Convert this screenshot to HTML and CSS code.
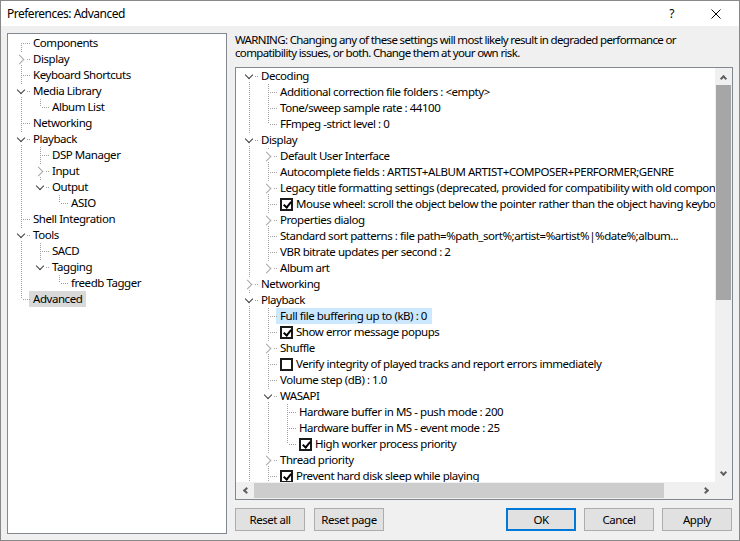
FILE: index.html
```html
<!DOCTYPE html>
<html lang="en">
<head>
    <meta charset="UTF-8">
    <meta name="viewport" content="width=device-width, initial-scale=1.0">
    <title>Preferences: Advanced</title>
    <link rel="stylesheet" href="styles.css">
</head>
<body>
<div class="window">
    <div class="titlebar">
        <span class="title">Preferences: Advanced</span>
        <span class="help">?</span>
        <svg class="close" width="10" height="10" viewBox="0 0 10 10">
            <path d="M0.5 0.5 L9.5 9.5 M9.5 0.5 L0.5 9.5" stroke="#000" stroke-width="1" fill="none"/>
        </svg>
    </div>

    <div class="content">
        <!-- page list -->
        <div class="tree nav">
            <div class="row"><span class="g f"></span><span class="lbl">Components</span></div>
            <div class="row"><span class="g t"><span class="exp closed"></span></span><span class="lbl">Display</span></div>
            <div class="row"><span class="g t"></span><span class="lbl">Keyboard Shortcuts</span></div>
            <div class="row"><span class="g t"><span class="exp open"></span></span><span class="lbl">Media Library</span></div>
            <div class="row"><span class="g v"></span><span class="g l"></span><span class="lbl">Album List</span></div>
            <div class="row"><span class="g t"></span><span class="lbl">Networking</span></div>
            <div class="row"><span class="g t"><span class="exp open"></span></span><span class="lbl">Playback</span></div>
            <div class="row"><span class="g v"></span><span class="g t"></span><span class="lbl">DSP Manager</span></div>
            <div class="row"><span class="g v"></span><span class="g t"><span class="exp closed"></span></span><span class="lbl">Input</span></div>
            <div class="row"><span class="g v"></span><span class="g l"><span class="exp open"></span></span><span class="lbl">Output</span></div>
            <div class="row"><span class="g v"></span><span class="g"></span><span class="g l"></span><span class="lbl">ASIO</span></div>
            <div class="row"><span class="g t"></span><span class="lbl">Shell Integration</span></div>
            <div class="row"><span class="g t"><span class="exp open"></span></span><span class="lbl">Tools</span></div>
            <div class="row"><span class="g v"></span><span class="g t"></span><span class="lbl">SACD</span></div>
            <div class="row"><span class="g v"></span><span class="g l"><span class="exp open"></span></span><span class="lbl">Tagging</span></div>
            <div class="row"><span class="g v"></span><span class="g"></span><span class="g l"></span><span class="lbl">freedb Tagger</span></div>
            <div class="row"><span class="g l"></span><span class="lbl sel">Advanced</span></div>
        </div>

        <div class="main">
            <p class="warning">WARNING: Changing any of these settings will most likely result in degraded performance or<br>compatibility issues, or both. Change them at your own risk.</p>

            <div class="adv">
                <div class="adv-top">
                    <div class="tree adv-rows">
                        <div class="row"><span class="g f"><span class="exp open"></span></span><span class="lbl">Decoding</span></div>
                        <div class="row"><span class="g v"></span><span class="g t"></span><span class="lbl">Additional correction file folders : &lt;empty&gt;</span></div>
                        <div class="row"><span class="g v"></span><span class="g t"></span><span class="lbl">Tone/sweep sample rate : 44100</span></div>
                        <div class="row"><span class="g v"></span><span class="g l"></span><span class="lbl">FFmpeg -strict level : 0</span></div>
                        <div class="row"><span class="g t"><span class="exp open"></span></span><span class="lbl">Display</span></div>
                        <div class="row"><span class="g v"></span><span class="g t"><span class="exp closed"></span></span><span class="lbl">Default User Interface</span></div>
                        <div class="row"><span class="g v"></span><span class="g t"></span><span class="lbl">Autocomplete fields : ARTIST+ALBUM ARTIST+COMPOSER+PERFORMER;GENRE</span></div>
                        <div class="row"><span class="g v"></span><span class="g t"><span class="exp closed"></span></span><span class="lbl">Legacy title formatting settings (deprecated, provided for compatibility with old components)</span></div>
                        <div class="row"><span class="g v"></span><span class="g t"></span><span class="lbl"><span class="cb on"></span>Mouse wheel: scroll the object below the pointer rather than the object having keyboard focus</span></div>
                        <div class="row"><span class="g v"></span><span class="g t"><span class="exp closed"></span></span><span class="lbl">Properties dialog</span></div>
                        <div class="row"><span class="g v"></span><span class="g t"></span><span class="lbl">Standard sort patterns : file path=%path_sort%;artist=%artist%|%date%;album...</span></div>
                        <div class="row"><span class="g v"></span><span class="g t"></span><span class="lbl">VBR bitrate updates per second : 2</span></div>
                        <div class="row"><span class="g v"></span><span class="g l"><span class="exp closed"></span></span><span class="lbl">Album art</span></div>
                        <div class="row"><span class="g t"><span class="exp closed"></span></span><span class="lbl">Networking</span></div>
                        <div class="row"><span class="g t"><span class="exp open"></span></span><span class="lbl">Playback</span></div>
                        <div class="row"><span class="g v"></span><span class="g t"></span><span class="lbl hot">Full file buffering up to (kB) : 0</span></div>
                        <div class="row"><span class="g v"></span><span class="g t"></span><span class="lbl"><span class="cb on"></span>Show error message popups</span></div>
                        <div class="row"><span class="g v"></span><span class="g t"><span class="exp closed"></span></span><span class="lbl">Shuffle</span></div>
                        <div class="row"><span class="g v"></span><span class="g t"></span><span class="lbl"><span class="cb"></span>Verify integrity of played tracks and report errors immediately</span></div>
                        <div class="row"><span class="g v"></span><span class="g t"></span><span class="lbl">Volume step (dB) : 1.0</span></div>
                        <div class="row"><span class="g v"></span><span class="g t"><span class="exp open"></span></span><span class="lbl">WASAPI</span></div>
                        <div class="row"><span class="g v"></span><span class="g v"></span><span class="g t"></span><span class="lbl">Hardware buffer in MS - push mode : 200</span></div>
                        <div class="row"><span class="g v"></span><span class="g v"></span><span class="g t"></span><span class="lbl">Hardware buffer in MS - event mode : 25</span></div>
                        <div class="row"><span class="g v"></span><span class="g v"></span><span class="g l"></span><span class="lbl"><span class="cb on"></span>High worker process priority</span></div>
                        <div class="row"><span class="g v"></span><span class="g t"><span class="exp closed"></span></span><span class="lbl">Thread priority</span></div>
                        <div class="row"><span class="g v"></span><span class="g t"></span><span class="lbl"><span class="cb on"></span>Prevent hard disk sleep while playing</span></div>
                    </div>
                    <div class="vscroll">
                        <div class="arrow"><span class="chev up"></span></div>
                        <div class="thumb"></div>
                        <div class="track"></div>
                        <div class="arrow"><span class="chev down"></span></div>
                    </div>
                </div>
                <div class="hscroll">
                    <div class="arrow"><span class="chev left"></span></div>
                    <div class="thumb"></div>
                    <div class="track"></div>
                    <div class="arrow"><span class="chev right"></span></div>
                    <div class="corner"></div>
                </div>
            </div>

            <div class="buttons">
                <button class="btn">Reset all</button>
                <button class="btn reset-page">Reset page</button>
                <button class="btn default">OK</button>
                <button class="btn">Cancel</button>
                <button class="btn">Apply</button>
            </div>
        </div>
    </div>
</div>
</body>
</html>
```

FILE: styles.css
```css
body {
    margin: 0;
    font-family: "Noto Sans", sans-serif;
    font-size: 11.5px;
    letter-spacing: -0.45px;
    color: #000;
    background: #fff;
}

.window {
    width: 740px;
    height: 541px;
    box-sizing: border-box;
    border: 1px solid #888;
    background: #f0f0f0;
    display: flex;
    flex-direction: column;
}

/* title bar */
.titlebar {
    height: 25px;
    flex: none;
    background: #fff;
    display: flex;
    align-items: center;
    padding-left: 6px;
}

.title {
    font-size: 12px;
    letter-spacing: -0.5px;
    margin-top: -1px;
}

.help {
    margin-left: auto;
    font-size: 12px;
    margin-top: -1px;
}

.close {
    margin: 0 18px 0 37px;
}

.content {
    flex: 1;
    display: flex;
    gap: 8px;
    padding: 7px 6px 6px 6px;
    min-height: 0;
}

/* trees */
.tree {
    background: #fff;
}

.nav {
    width: 220px;
    flex: none;
    box-sizing: border-box;
    border: 1px solid #828790;
    padding: 1px 0 0 4px;
}

.row {
    display: flex;
    align-items: center;
    height: 16px;
    white-space: nowrap;
}

.lbl {
    display: flex;
    align-items: center;
    height: 16px;
    box-sizing: border-box;
    padding: 0 3px 2px 2px;
}

.lbl.sel {
    background: #d9d9d9;
    margin-left: -2px;
    padding: 0 4px 2px 4px;
}

.lbl.hot {
    background: #cce8ff;
    margin-left: -2px;
    padding: 0 5px 2px 4px;
}

.g {
    flex: none;
    width: 19px;
    height: 16px;
    position: relative;
}

.g::before,
.g::after {
    content: '';
    position: absolute;
    display: none;
}

.g::before {
    left: 9px;
    width: 1px;
    top: 0;
    bottom: 0;
    background: repeating-linear-gradient(to bottom, #a0a0a0 0 1px, transparent 1px 2px);
}

.g::after {
    left: 10px;
    right: 0;
    top: 8px;
    height: 1px;
    background: repeating-linear-gradient(to right, transparent 0 1px, #a0a0a0 1px 2px);
}

.v::before,
.t::before,
.l::before,
.f::before,
.t::after,
.l::after,
.f::after {
    display: block;
}

.l::before {
    bottom: 8px;
}

.f::before {
    top: 8px;
}

/* expand / collapse glyphs */
.exp {
    position: absolute;
    left: 3px;
    top: 2px;
    width: 12px;
    height: 12px;
    background: #fff;
    z-index: 1;
    display: flex;
    align-items: center;
    justify-content: center;
}

.exp::before {
    content: '';
    width: 6px;
    height: 6px;
    box-sizing: border-box;
    transform: rotate(45deg);
}

.exp.open::before {
    border-right: 1.5px solid #3c3c3c;
    border-bottom: 1.5px solid #3c3c3c;
    margin-top: -3px;
}

.exp.closed::before {
    width: 7px;
    height: 7px;
    border-right: 1.5px solid #a6a6a6;
    border-top: 1.5px solid #a6a6a6;
    margin-left: -4px;
}

/* checkboxes */
.cb {
    width: 13px;
    height: 13px;
    box-sizing: border-box;
    border: 2px solid #1a1a1a;
    background: #fff;
    margin: 2px 3px 0 0;
    position: relative;
}

.cb.on::after {
    content: '';
    position: absolute;
    left: 3px;
    top: 0;
    width: 3px;
    height: 6px;
    border-right: 2px solid #000;
    border-bottom: 2px solid #000;
    transform: rotate(40deg);
}

/* right side */
.main {
    width: 498px;
    flex: none;
    display: flex;
    flex-direction: column;
}

.warning {
    margin: 0;
    line-height: 13px;
    letter-spacing: -0.65px;
    white-space: nowrap;
}

.adv {
    margin-top: 8px;
    height: 433px;
    box-sizing: border-box;
    border: 1px solid #828790;
    background: #fff;
    display: flex;
    flex-direction: column;
}

.adv-top {
    height: 414px;
    display: flex;
}

.adv-rows {
    flex: 1;
    overflow: hidden;
    padding-left: 4px;
}

.vscroll {
    width: 17px;
    display: flex;
    flex-direction: column;
    background: #f0f0f0;
}

.vscroll .thumb {
    height: 215px;
    margin: 0 1px;
    background: #a6a6a6;
}

.track {
    flex: 1;
}

.hscroll {
    height: 17px;
    display: flex;
    background: #f0f0f0;
}

.hscroll .thumb {
    width: 410px;
    margin: 1px 0 1px 1px;
    background: #cdcdcd;
}

.arrow,
.corner {
    width: 17px;
    height: 17px;
    flex: none;
    display: flex;
    align-items: center;
    justify-content: center;
}

.chev {
    width: 5px;
    height: 5px;
    box-sizing: border-box;
    border-color: #606060;
    border-style: solid;
    border-width: 0;
    transform: rotate(45deg);
}

.chev.up {
    border-left-width: 2px;
    border-top-width: 2px;
    margin-top: 3px;
}

.chev.down {
    border-right-width: 2px;
    border-bottom-width: 2px;
    margin-top: -3px;
}

.chev.left {
    border-left-width: 2px;
    border-bottom-width: 2px;
    margin-left: 3px;
}

.chev.right {
    border-right-width: 2px;
    border-top-width: 2px;
    margin-left: -3px;
}

/* buttons */
.buttons {
    margin-top: 8px;
    display: flex;
    gap: 8px;
    padding-right: 1px;
}

.btn {
    width: 70px;
    height: 23px;
    box-sizing: border-box;
    border: 1px solid #adadad;
    background: #e1e1e1;
    font: inherit;
    letter-spacing: inherit;
    color: #000;
    padding: 0 0 1px;
}

.btn.reset-page {
    margin-left: 1px;
}

.btn.default {
    margin-left: auto;
    border: 2px solid #0078d7;
}
```
